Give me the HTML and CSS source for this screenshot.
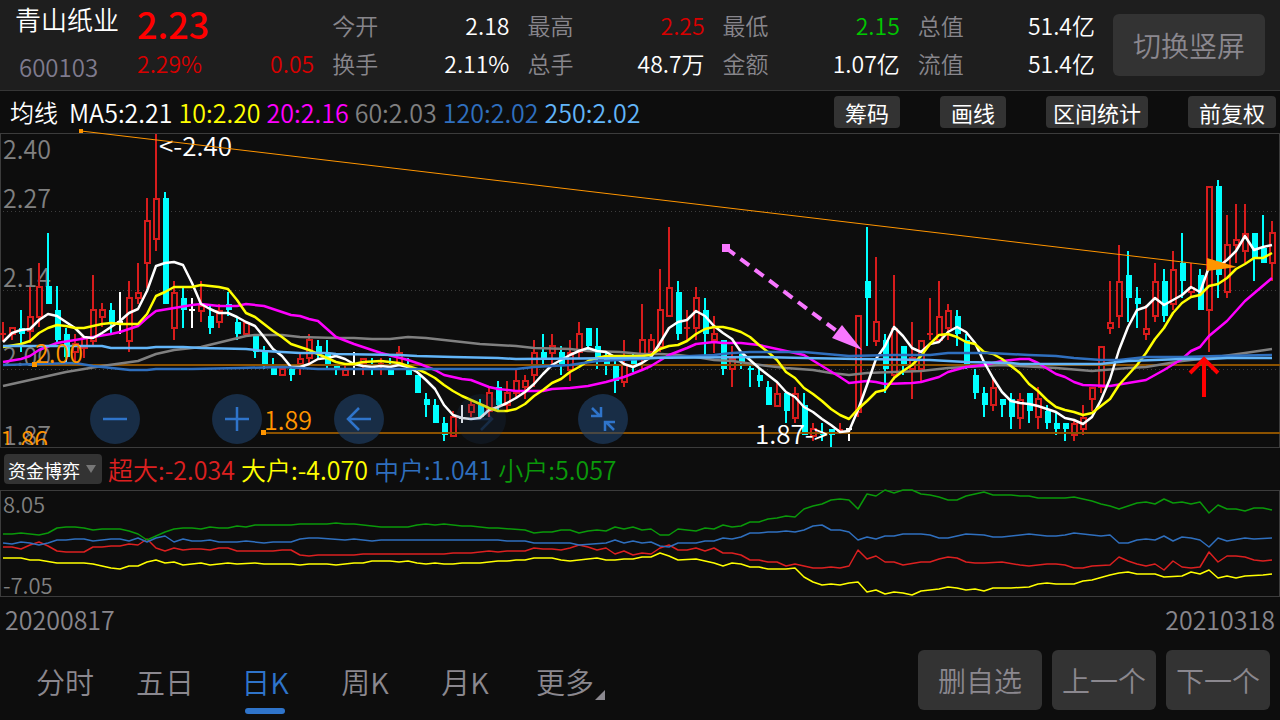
FILE: index.html
```html
<!DOCTYPE html>
<html lang="zh-CN">
<head>
<meta charset="utf-8">
<meta name="viewport" content="width=device-width, initial-scale=1">
<title>青山纸业 600103</title>
<link rel="stylesheet" href="styles.css">
</head>
<body>
<header class="quote">
  <div class="stock">
    <h1 class="stock-name">青山纸业</h1>
    <span class="stock-code">600103</span>
  </div>
  <div class="price">
    <strong class="price-now">2.23</strong>
    <div class="pair up"><span>2.29%</span><span>0.05</span></div>
  </div>
  <dl class="stats">
    <div class="pair"><dt>今开</dt><dd>2.18</dd></div>
    <div class="pair"><dt>换手</dt><dd>2.11%</dd></div>
  </dl>
  <dl class="stats">
    <div class="pair"><dt>最高</dt><dd class="up">2.25</dd></div>
    <div class="pair"><dt>总手</dt><dd>48.7万</dd></div>
  </dl>
  <dl class="stats">
    <div class="pair"><dt>最低</dt><dd class="down">2.15</dd></div>
    <div class="pair"><dt>金额</dt><dd>1.07亿</dd></div>
  </dl>
  <dl class="stats">
    <div class="pair"><dt>总值</dt><dd>51.4亿</dd></div>
    <div class="pair"><dt>流值</dt><dd>51.4亿</dd></div>
  </dl>
  <button class="rotate" type="button">切换竖屏</button>
</header>

<main>
  <div class="averages">
    <div class="legend">
      <span class="legend-title">均线</span>
      <span>MA5:2.21</span>
      <span class="c-yellow">10:2.20</span>
      <span class="c-magenta">20:2.16</span>
      <span class="c-gray">60:2.03</span>
      <span class="c-blue">120:2.02</span>
      <span class="c-sky">250:2.02</span>
    </div>
    <div class="tools">
      <button class="chip" type="button">筹码</button>
      <button class="chip" type="button">画线</button>
      <button class="chip tight" type="button">区间统计</button>
      <button class="chip" type="button">前复权</button>
    </div>
  </div>

  <section class="chart">
    <svg class="plot" viewBox="0 133 1280 315" role="img" aria-label="日K线图">
      <defs><clipPath id="frame"><rect x="0" y="133" width="1280" height="312"/></clipPath></defs>
      <rect class="frame" x="0.5" y="133.5" width="1279" height="314"/>
      <g class="grid">
        <path d="M3 211.5H1279M3 290.5H1279M3 369.5H1279"/>
      </g>
      <g class="axis">
        <text x="3" y="159">2.40</text>
        <text x="3" y="208">2.27</text>
        <text x="3" y="287">2.14</text>
        <text x="3" y="366">2.00</text>
        <text x="3" y="445">1.87</text>
      </g>
      <g id="candles"></g>
      <g class="level">
        <path d="M35 365H1280M264 433H1280"/>
      </g>
      <g id="averages"></g>
      <g class="mark-text">
        <text x="159" y="156">&lt;-2.40</text>
        <text x="755" y="444">1.87-&gt;</text>
      </g>
      <g class="level-text">
        <rect x="32" y="362" width="5" height="5"/>
        <rect x="261" y="430" width="5" height="5"/>
        <rect x="79" y="129" width="4" height="4"/>
        <text x="35" y="363">2.00</text>
        <text x="264" y="430">1.89</text>
        <text x="0" y="450" clip-path="url(#frame)">1.86</text>
        <path class="trend" d="M81 131L1208 265"/>
        <path d="M1207 258L1237 267L1207 271Z"/>
      </g>
      <g class="violet">
        <rect x="722" y="244" width="8" height="8"/>
        <path class="dashes" d="M726 248L838 332"/>
        <path d="M842 325L862 350L832 338Z"/>
      </g>
      <path class="buy" d="M1204 397V359M1190 373L1204 359L1218 373"/>
    </svg>
    <div class="pad">
      <button class="round" type="button" aria-label="缩小"><svg viewBox="0 0 50 50"><path d="M13 25H37"/></svg></button>
      <button class="round" type="button" aria-label="放大"><svg viewBox="0 0 50 50"><path d="M13 25H37M25 13V37"/></svg></button>
      <button class="round" type="button" aria-label="左移"><svg viewBox="0 0 50 50"><path d="M37 25H14M25 14L14 25L25 36"/></svg></button>
      <button class="round faint" type="button" aria-label="右移"><svg viewBox="0 0 50 50"><path d="M13 25H36M25 14L36 25L25 36"/></svg></button>
      <button class="round" type="button" aria-label="收起"><svg viewBox="0 0 50 50"><path d="M14 14L22 22M23 13V22H13M36 36L28 28M27 37V28H37"/></svg></button>
    </div>
  </section>

  <div class="flow">
    <span class="picker">
      <select class="picker-select" aria-label="指标">
        <option>资金博弈</option>
      </select>
    </span>
    <div class="legend">
      <span class="c-red">超大:-2.034</span>
      <span class="c-yellow">大户:-4.070</span>
      <span class="c-blue">中户:1.041</span>
      <span class="c-green">小户:5.057</span>
    </div>
  </div>

  <section class="chart">
    <svg class="plot" viewBox="0 490 1280 107" role="img" aria-label="资金博弈图">
      <rect class="frame" x="0.5" y="490.5" width="1279" height="106"/>
      <g class="axis small">
        <text x="3" y="513">8.05</text>
        <text x="3" y="594">-7.05</text>
      </g>
      <g id="flows"></g>
    </svg>
  </section>

  <div class="dates"><time datetime="2020-08-17">20200817</time><time datetime="2021-03-18">20210318</time></div>
</main>

<footer class="bottom">
  <nav class="tabs">
    <button class="tab" type="button">分时</button>
    <button class="tab" type="button">五日</button>
    <button class="tab active" type="button">日K</button>
    <button class="tab" type="button">周K</button>
    <button class="tab" type="button">月K</button>
    <button class="tab more" type="button">更多</button>
  </nav>
  <div class="actions">
    <button class="action wide" type="button">删自选</button>
    <button class="action" type="button">上一个</button>
    <button class="action" type="button">下一个</button>
  </div>
</footer>
<script src="chart.js"></script>
</body>
</html>
```
FILE: styles.css
```css
* {
  box-sizing: border-box;
}

body {
  margin: 0;
  min-height: 100vh;
  display: flex;
  flex-direction: column;
  background: #0d0d0d;
  color: #fff;
  font-family: "Noto Sans CJK SC", "Noto Sans", sans-serif;
  font-size: 24px;
  font-weight: 350;
  line-height: 32px;
}

button,
select {
  border: 0;
  padding: 0;
  font: inherit;
  color: inherit;
  background: none;
}

h1,
dl,
dd {
  margin: 0;
  font: inherit;
}

.quote {
  display: grid;
  grid-template-columns: 104px repeat(5, 1fr) 152px;
  column-gap: 18px;
  padding: 0 15px;
  height: 91px;
  background: #1e1e1e;
  border-bottom: 1px solid #363636;
  white-space: nowrap;
}

.stock {
  display: flex;
  flex-direction: column;
  gap: 16px;
  padding-top: 3px;
}

.stock-name {
  font-size: 26px;
}

.stock-code {
  padding-left: 4px;
  color: #7f7b8e;
}

.price,
.stats {
  display: flex;
  flex-direction: column;
  justify-content: space-between;
  padding: 9px 0 11px;
}

.price {
  padding-top: 0;
}

.price-now {
  color: #f00;
  font-size: 36px;
  font-weight: 500;
  line-height: 46px;
}

.pair {
  display: flex;
  justify-content: space-between;
  font-size: 23px;
}

.pair dt {
  color: #88868c;
}

.pair.up,
.pair .up {
  color: #d90000;
}

.pair .down {
  color: #00c800;
}

.rotate {
  height: 62px;
  margin-top: 14px;
  border-radius: 6px;
  background: #333;
  color: #8b888f;
  font-size: 28px;
}

.averages {
  display: flex;
  justify-content: space-between;
  align-items: center;
  height: 42px;
  padding: 0 4px 0 10px;
}

.legend {
  display: flex;
  gap: 6px;
  font-size: 25px;
  white-space: nowrap;
}

.legend-title {
  margin-right: 5px;
  font-size: 24px;
}

.tools {
  display: flex;
  gap: 40px;
}

.chip {
  height: 32px;
  padding: 0 11px;
  border-radius: 4px;
  background: #333;
  font-size: 22px;
  font-weight: 400;
  line-height: 30px;
}

.tight {
  padding: 0 7px;
}

.c-yellow { color: #ff0; }
.c-magenta { color: #f0f; }
.c-gray { color: #808080; }
.c-blue { color: #2f6fbe; }
.c-sky { color: #62b5f8; }
.c-red { color: #dc2020; }
.c-green { color: #0a990a; }

.chart {
  position: relative;
}

.plot {
  display: block;
  width: 100%;
  overflow: visible;
}

.plot text {
  font-size: 25px;
}

.frame,
.line,
.grid path,
.level path {
  fill: none;
}

.frame {
  stroke: #3c3c3c;
}

.grid path {
  stroke: #3d3d3d;
  stroke-dasharray: 1 3;
}

.axis {
  fill: #808080;
}

.plot .small text {
  font-size: 22px;
}

.level path {
  stroke: #8c5200;
  stroke-width: 2;
}

.level-text {
  fill: #ff9500;
}

.level-text .trend {
  stroke: #ff9500;
}

.plot .mark-text text {
  fill: #fff;
  font-size: 26px;
}

.violet {
  fill: #f877ff;
}

.violet .dashes {
  stroke: #f877ff;
  stroke-width: 4;
  stroke-dasharray: 11 7;
}

.buy {
  fill: none;
  stroke: #f00;
  stroke-width: 4;
}

#candles {
  shape-rendering: crispEdges;
}

.rise { fill: #d71c1c; }
.fall { fill: #0ff; }
.flat { fill: #fff; }

.hollow {
  fill: #0d0d0d;
  stroke: #d71c1c;
  stroke-width: 2;
}

.line {
  stroke: currentColor;
  stroke-width: 2;
  stroke-linejoin: round;
}

#averages .line {
  stroke-width: 2.5;
}

#flows .line {
  stroke-width: 1.5;
}

.pad {
  position: absolute;
  left: 90px;
  bottom: 4px;
  display: flex;
  gap: 72px;
}

.round {
  width: 50px;
  height: 50px;
  border-radius: 50%;
  background: rgba(31, 66, 108, 0.6);
}

.round svg {
  display: block;
  fill: none;
  stroke: #2f74ca;
  stroke-width: 2.5;
}

.faint {
  opacity: 0.3;
}

.flow {
  display: flex;
  align-items: center;
  gap: 6px;
  height: 42px;
  padding-left: 4px;
}

.picker {
  position: relative;
}

.picker-select {
  display: block;
  appearance: none;
  width: 98px;
  height: 30px;
  padding: 0 0 2px 4px;
  border-radius: 4px;
  background: #333;
  font-size: 18px;
  font-weight: 400;
}

.picker::after {
  content: "";
  position: absolute;
  right: 6px;
  top: 11px;
  border: 5px solid transparent;
  border-top: 8px solid #777;
  border-bottom: 0;
  pointer-events: none;
}

.dates {
  display: flex;
  justify-content: space-between;
  padding: 6px 5px 0;
  color: #88868c;
  font-size: 25px;
}

.bottom {
  display: flex;
  justify-content: space-between;
  margin-top: auto;
  padding: 0 10px 0 15px;
  height: 70px;
  color: #8b888f;
}

.tabs,
.actions {
  display: flex;
}

.actions {
  gap: 10px;
}

.tab {
  position: relative;
  width: 100px;
  height: 62px;
  font-size: 29px;
}

.active {
  color: #2f74ca;
}

.active::after {
  content: "";
  position: absolute;
  left: 30px;
  bottom: -2px;
  width: 40px;
  height: 6px;
  border-radius: 3px;
  background: #2f74ca;
}

.more::after {
  content: "";
  position: absolute;
  right: 10px;
  bottom: 12px;
  border-left: 10px solid transparent;
  border-bottom: 10px solid #8b888f;
}

.action {
  width: 104px;
  height: 60px;
  border-radius: 6px;
  background: #333;
  font-size: 28px;
}

.wide {
  width: 124px;
}
```
FILE: chart.js
```js
// Each candle: kind (r rise, c fall, w flat), high, body top, body bottom, low.
const candles = `r 322 333 335 341|r 327 327 334 340|c 310 328 334 352|r 287 316 331 343|r 263 286 317 327|c 233 286 304 304|c 286 310 340 343|c 328 334 357 363|r 334 343 352 363|r 337 337 348 358
r 275 309 341 346|r 303 309 317 327|c 303 310 323 333|w 292 321 323 334|r 281 297 341 352|r 263 292 298 304|r 198 220 263 288|r 134 198 239 251|c 192 198 304 304|r 281 292 328 340
c 288 298 310 328|w 298 309 311 328|r 281 305 311 322|c 304 316 328 334|r 304 310 322 328|c 292 304 310 316|c 318 322 334 340|r 322 322 334 334|c 336 336 352 358|c 346 352 364 369
c 358 364 375 375|r 365 368 375 375|c 365 369 375 381|r 353 358 364 375|r 334 339 358 364|c 340 346 353 358|c 340 353 364 368|c 364 364 369 375|r 364 369 375 375|w 352 363 365 375
r 358 358 364 375|c 358 364 367 375|r 358 363 365 375|c 358 369 375 375|r 346 352 364 364|c 358 364 375 375|c 375 375 393 393|c 393 399 405 417|c 399 405 423 423|c 417 423 435 441
r 411 416 436 436|w 405 417 419 423|r 399 404 412 417|c 399 405 417 417|r 387 392 411 417|c 381 387 405 411|r 381 392 405 411|r 370 380 393 399|r 375 380 387 399|r 340 352 375 387
c 334 352 358 364|r 334 345 353 364|c 346 352 364 375|r 340 352 370 381|r 322 333 352 358|c 328 328 346 350|c 328 346 358 369|c 352 358 364 375|c 358 364 381 393|r 340 364 382 387
c 354 358 364 372|r 304 339 355 370|r 334 339 352 352|r 269 309 347 352|r 227 287 316 316|c 281 292 334 340|r 310 327 329 340|r 287 297 328 340|c 298 310 334 355|r 316 333 340 353
c 340 340 369 375|r 346 358 369 387|c 352 354 363 369|c 364 368 370 387|c 369 375 381 387|c 381 387 405 405|r 383 393 406 406|c 393 393 411 423|r 387 393 418 423|c 393 405 435 435
r 423 428 436 441|c 423 433 435 441|c 429 429 435 447|r 423 429 433 434|w 429 428 430 441|r 315 315 412 417|c 227 281 298 346|r 257 321 341 346|c 334 340 369 393|r 275 328 375 380
c 346 346 364 375|r 322 357 369 399|r 340 340 369 382|r 298 333 335 340|r 281 316 340 340|r 304 310 328 340|c 310 316 334 346|c 334 340 364 369|c 369 375 393 399|c 387 393 405 417
r 378 387 405 411|c 399 399 405 417|c 393 399 417 429|r 393 399 418 429|c 393 393 411 423|r 387 398 417 429|c 405 411 423 429|c 413 423 429 435|c 423 423 429 441|r 420 423 435 441
r 405 417 429 435|r 387 387 399 411|r 346 346 387 393|r 281 322 328 334|r 245 281 316 328|c 251 275 298 322|c 287 298 304 328|r 305 328 334 340|r 263 281 316 322|c 269 281 316 322
r 251 269 304 310|c 233 263 281 298|r 263 287 292 297|c 269 275 310 310|r 186 186 310 352|c 180 186 275 298|r 215 244 292 298|r 204 239 245 263|r 204 233 251 263|c 233 233 258 281
c 215 248 263 263|r 221 232 263 281`;

const averages = {
  "c-gray": "3,386 66,372 102,366 138,361 156,354 174,350 201,347 246,336 255,335 282,335 300,337 336,338 354,338 372,339 390,339 408,337 426,338 453,341 480,344 516,346 534,348 570,349 588,351 620,352 642,354 660,354 678,355 696,357 714,360 732,361 768,366 786,368 813,370 831,373 849,375 867,373 921,371 948,368 966,367 1002,365 1020,366 1056,368 1092,371 1128,368 1146,367 1182,361 1209,358 1245,353 1272,349",
  "c-magenta": "3,362 21,359 30,356 39,350 57,343 75,340 93,337 111,334 120,332 138,326 147,318 156,311 174,308 192,305 201,304 219,306 237,306 246,304 264,306 282,312 291,315 300,316 309,319 318,321 336,337 354,344 381,353 408,360 420,364 435,370 444,375 462,379 471,380 489,387 498,389 516,391 543,391 552,389 570,388 588,386 606,382 624,377 642,370 651,366 669,355 687,348 696,344 714,342 723,343 741,343 759,345 777,349 795,353 804,355 822,366 840,377 849,383 867,381 876,382 885,384 912,383 921,382 939,377 948,372 966,367 984,365 1002,361 1020,359 1029,359 1038,363 1056,374 1065,377 1074,382 1083,385 1110,386 1128,383 1146,380 1164,370 1182,359 1191,351 1200,347 1209,336 1227,321 1245,301 1272,278",
  "c-white": "3,342 12,333 21,330 30,329 39,320 48,314 57,316 66,322 75,328 84,337 93,338 102,333 111,327 120,321 129,313 138,309 147,291 156,266 165,263 174,262 183,265 192,283 201,304 210,309 219,313 228,313 237,317 246,322 255,326 264,337 273,349 282,356 291,367 300,367 309,364 318,359 327,358 336,356 345,359 354,364 363,366 372,367 381,366 390,367 399,365 408,367 417,372 426,380 435,389 444,405 453,415 462,418 471,419 480,418 489,410 498,407 507,403 516,398 525,392 534,384 543,374 552,365 561,360 570,355 579,351 588,348 597,351 606,352 615,357 624,364 633,367 642,363 651,357 660,343 669,328 678,322 687,320 696,311 705,316 714,326 723,333 732,339 741,352 750,360 759,368 768,375 777,382 786,392 795,397 804,407 813,412 822,419 831,425 840,432 849,431 858,410 867,385 876,359 885,346 894,327 903,336 912,348 921,352 930,344 939,342 948,332 957,327 966,332 975,343 984,362 993,378 1002,392 1011,401 1020,403 1029,404 1038,406 1047,409 1056,412 1065,418 1074,420 1083,424 1092,417 1101,400 1110,379 1119,350 1128,327 1137,310 1146,307 1155,298 1164,305 1173,300 1182,295 1191,287 1200,292 1209,267 1218,267 1227,260 1236,251 1245,236 1254,250 1263,247 1272,245",
  "c-yellow": "3,347 21,344 30,341 39,333 48,328 57,325 66,326 75,328 84,328 93,326 102,324 111,323 120,324 138,324 147,314 156,296 165,292 174,287 192,287 201,285 219,287 228,289 237,300 246,313 255,317 264,324 273,331 282,337 291,344 309,350 318,354 327,358 336,362 345,364 354,364 363,362 381,361 399,363 417,369 426,373 435,378 444,385 453,391 462,396 471,400 480,404 489,408 498,411 507,411 516,409 525,404 534,396 543,390 552,383 561,379 570,372 579,367 588,361 597,358 606,356 642,356 651,355 660,349 669,346 678,345 687,341 696,334 705,329 714,327 723,327 732,329 741,332 750,337 759,345 768,352 777,360 786,372 795,378 804,388 813,394 822,401 831,409 840,415 849,419 858,409 867,401 876,392 885,390 894,378 903,371 912,365 921,356 930,344 939,335 948,334 957,337 966,342 975,344 984,352 993,354 1002,359 1011,366 1020,373 1029,384 1038,391 1047,400 1056,407 1065,410 1074,412 1083,415 1092,413 1101,406 1110,399 1119,385 1128,375 1137,365 1146,353 1155,339 1164,328 1173,313 1182,303 1191,297 1200,295 1209,286 1218,284 1227,278 1236,269 1245,264 1254,258 1263,258 1272,253",
  "c-blue": "3,365 75,363 93,366 130,370 147,370 156,369 192,369 240,368 282,367 318,369 516,369 534,367 570,365 597,361 642,359 669,357 714,355 732,353 750,352 804,352 849,356 894,355 930,355 948,353 990,353 1029,355 1056,356 1074,358 1101,360 1119,360 1146,357 1182,357 1218,356 1272,355",
  "c-sky": "3,346 102,346 111,348 147,348 156,347 183,347 201,348 246,349 264,351 300,353 327,353 336,354 399,355 417,356 453,357 498,358 516,359 760,357 804,358 858,359 930,360 966,362 1011,363 1020,364 1100,364 1128,361 1182,359 1209,359 1227,358 1272,358"
};

const flows = {
  "c-red": "3,547 12,547 21,549 30,545 39,542 48,546 57,551 66,552 84,552 93,547 102,547 111,546 120,546 129,544 138,545 147,539 156,548 165,551 174,548 183,550 192,549 201,549 210,550 219,548 228,548 237,551 273,551 282,550 291,550 300,555 309,556 318,555 354,555 363,554 444,554 453,553 471,553 489,551 498,552 507,551 525,551 534,548 543,549 552,549 561,550 570,548 579,545 588,547 597,550 606,548 615,554 624,551 633,555 642,553 651,554 660,548 669,545 678,550 687,550 696,548 705,551 714,548 723,553 732,553 741,555 750,560 759,560 768,562 777,562 786,566 795,564 813,568 822,568 831,567 840,568 849,566 858,550 867,559 876,556 885,562 894,562 903,565 921,562 930,562 939,559 948,557 957,558 966,562 975,563 984,563 1002,562 1020,565 1029,566 1047,564 1056,564 1065,565 1074,568 1083,568 1092,566 1110,565 1119,557 1128,561 1137,564 1146,566 1155,564 1164,570 1173,561 1182,567 1191,568 1200,567 1209,552 1218,562 1227,556 1236,556 1245,557 1254,560 1263,561 1272,560",
  "c-yellow": "3,558 21,558 30,560 39,560 57,563 84,563 93,564 111,568 120,569 129,566 138,566 147,562 156,560 165,563 174,562 183,565 201,563 210,565 228,563 237,564 255,563 264,564 291,564 300,565 309,564 327,564 336,565 354,563 363,563 372,561 390,561 399,562 408,561 417,563 426,564 435,563 444,564 453,564 462,563 480,563 498,561 507,561 516,560 525,560 534,558 552,558 561,560 570,561 597,558 606,560 615,560 624,559 633,559 642,557 651,557 660,553 669,556 678,560 696,559 714,563 723,566 732,563 741,564 750,567 759,567 768,569 786,569 795,568 804,577 813,582 822,585 831,584 840,585 849,583 858,582 867,592 876,590 885,594 894,592 903,593 912,595 921,591 939,589 948,587 957,588 966,590 975,589 984,591 993,588 1011,588 1029,587 1038,584 1047,583 1056,584 1074,584 1083,581 1092,580 1110,575 1119,573 1128,572 1137,574 1155,574 1164,577 1182,576 1191,572 1200,574 1209,570 1218,578 1227,576 1236,578 1245,576 1263,575 1272,574",
  "c-green": "3,534 12,534 21,533 39,535 48,533 57,528 66,527 75,527 84,528 93,530 102,529 120,529 129,531 138,534 147,540 156,536 165,532 174,529 183,528 192,528 201,529 210,527 219,528 228,528 237,526 246,527 255,525 291,525 300,524 327,524 336,523 345,524 354,524 381,527 408,527 417,525 426,524 435,525 444,524 462,526 471,526 489,528 498,528 525,530 534,533 543,532 552,532 561,530 570,530 579,533 588,531 597,530 606,531 615,527 624,529 633,527 642,530 651,529 660,535 669,535 678,529 696,531 705,528 714,529 723,525 732,527 741,526 750,522 759,522 768,519 777,518 786,516 795,517 804,509 813,506 822,504 831,500 840,499 849,500 858,509 867,494 876,496 885,490 894,493 903,490 912,490 921,494 930,495 939,497 948,500 957,500 966,496 975,494 984,492 993,495 1011,495 1020,496 1029,496 1038,498 1065,498 1074,497 1083,499 1092,501 1101,504 1110,506 1119,509 1128,506 1137,503 1146,502 1155,504 1164,499 1173,503 1182,502 1191,504 1200,502 1209,513 1218,505 1227,509 1236,509 1245,511 1254,508 1263,508 1272,510",
  "c-blue": "3,543 12,544 21,542 30,543 39,545 48,543 57,540 66,540 75,539 84,539 93,541 111,539 120,539 129,541 138,538 147,542 156,538 165,536 174,542 183,539 192,541 201,541 210,540 219,542 237,542 246,541 264,543 273,542 291,542 300,539 309,538 318,538 345,540 354,539 372,541 381,540 498,540 507,541 525,541 534,543 570,543 579,545 606,543 615,540 624,543 633,541 642,543 651,542 660,546 669,547 678,543 696,543 705,541 714,541 723,538 732,539 741,537 750,533 759,533 768,532 777,532 786,531 795,532 804,530 813,526 822,525 831,530 840,530 849,532 858,540 867,537 876,539 885,536 894,536 903,534 921,534 930,535 939,538 948,538 966,534 984,535 993,537 1002,537 1029,534 1047,536 1056,536 1065,535 1074,533 1101,536 1110,535 1119,543 1128,543 1137,540 1146,539 1155,540 1164,536 1173,541 1182,537 1191,538 1200,540 1209,547 1218,538 1227,541 1245,538 1254,539 1272,538"
};

function add(parent, name, attributes) {
  const node = document.createElementNS("http://www.w3.org/2000/svg", name);
  for (const key in attributes) node.setAttribute(key, attributes[key]);
  parent.appendChild(node);
}

const kinds = { r: "rise", c: "fall", w: "flat" };
const candleLayer = document.getElementById("candles");
candles.split(/[|\n]/).forEach((item, index) => {
  const [kind, ...values] = item.split(" ");
  const [high, top, bottom, low] = values.map(Number);
  const x = 3 + 9 * index;
  add(candleLayer, "rect", { class: kinds[kind], x: x - 1, y: high, width: 2, height: low - high });
  if (kind === "r" && bottom - top > 4) {
    add(candleLayer, "rect", { class: "hollow", x: x - 2, y: top + 1, width: 5, height: bottom - top - 1 });
  } else {
    const left = kind === "c" ? x - 2 : x - 3;
    add(candleLayer, "rect", { class: kinds[kind], x: left, y: top, width: 6, height: bottom - top });
  }
});

function drawLines(id, series) {
  const layer = document.getElementById(id);
  for (const name in series) add(layer, "polyline", { class: "line " + name, points: series[name] });
}

drawLines("averages", averages);
drawLines("flows", flows);
```
